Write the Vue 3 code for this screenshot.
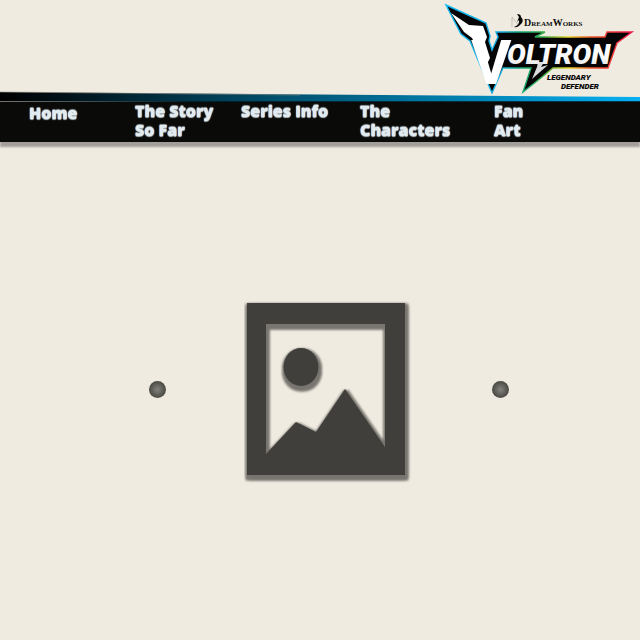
<script setup>
const links = [
  { label: 'Home', href: '#home', single: true },
  { label: 'The Story So Far', href: '#story' },
  { label: 'Series Info', href: '#series' },
  { label: 'The Characters', href: '#characters' },
  { label: 'Fan Art', href: '#art' }
]
const shades = [[-1, 1], [1, 1], [3, 1], [-1, 3], [3, 3], [-1, 5], [1, 5], [3, 5]]
</script>

<template>
  <div class="page">
    <header>
      <div class="brand">
        <a href="#home" aria-label="DreamWorks Voltron Legendary Defender">
          <svg class="logo" viewBox="440 0 200 96">
            <defs>
              <linearGradient id="edge" gradientUnits="userSpaceOnUse" x1="445" y1="0" x2="632" y2="0">
                <stop offset="0" stop-color="#12b9f5" />
                <stop offset=".3" stop-color="#16aee0" />
                <stop offset=".4" stop-color="#12a878" />
                <stop offset=".52" stop-color="#36a94b" />
                <stop offset=".66" stop-color="#e9d62a" />
                <stop offset=".78" stop-color="#f0592b" />
                <stop offset="1" stop-color="#ed1849" />
              </linearGradient>
              <linearGradient id="metal" x1="0" y1="0" x2="0" y2="1">
                <stop offset="0" stop-color="#fff" />
                <stop offset=".6" stop-color="#fafafa" />
                <stop offset="1" stop-color="#d5d7da" />
              </linearGradient>
            </defs>
            <path d="M446 5 L486 23 L490 36 L489 41 L492 50 L498 37 L496 32 H545 L535 37 H605 L607 32 H632 L617 43 L608 68 H553 L537 81 L523 92 L531 68 H503 L492 93 L470 41 L461 34 Z" fill="#050505" stroke="url(#edge)" stroke-width="1.4" />
            <path d="M451 13 L469 25 L483 26 L487 37 L485 42 L490 58 L486 66 L472 38 L464 32 Z" fill="#fff" />
            <path d="M538 62 H544 L541 67 L548 65 L532 79 L537 67 Z" fill="#d9dbdd" />
            <text class="initial" x="471" y="84">V</text>
            <text class="title" x="507" y="64" fill="url(#metal)">OLTRON</text>
            <path d="M512 27 V17 L519 26" fill="none" stroke="#aaa69d" stroke-width=".6" />
            <path d="M517 14 Q521 14 521 17 Q525 21 520 25 Q517 28 514 27 Q520 25 519 20 L517 22 L519 17 Z" fill="#080808" />
            <text class="studio" x="524" y="26"><tspan class="cap">D</tspan>REAM<tspan class="cap">W</tspan>ORKS</text>
            <text class="tag" x="547" y="80">LEGENDARY</text>
            <text class="tag" x="561" y="89">DEFENDER</text>
          </svg>
        </a>
      </div>
      <svg class="stripe" viewBox="0 0 640 11" preserveAspectRatio="none" aria-hidden="true">
        <defs>
          <linearGradient id="sky">
            <stop offset="0" stop-color="#000" />
            <stop offset=".1" stop-color="#001119" />
            <stop offset=".35" stop-color="#00415a" />
            <stop offset=".7" stop-color="#007dab" />
            <stop offset="1" stop-color="#08b0f2" />
          </linearGradient>
          <linearGradient id="line">
            <stop offset="0" stop-color="#77736e" />
            <stop offset=".3" stop-color="#00202d" />
            <stop offset="1" stop-color="#003850" />
          </linearGradient>
        </defs>
        <path d="M0 1 L640 6 V11 H0 Z" fill="url(#sky)" />
        <path d="M0 1 L300 4" stroke="#8d8982" stroke-width=".6" />
        <path d="M0 10 H640 V11 H0 Z" fill="url(#line)" />
      </svg>
      <nav aria-label="Main">
        <a v-for="link in links" :key="link.label" :href="link.href" :class="{ single: link.single }">{{ link.label }}</a>
      </nav>
    </header>
    <main>
      <button class="dot" type="button" aria-label="Previous"></button>
      <svg class="picture" viewBox="244 301 170 182" role="img" aria-label="Image placeholder">
        <defs>
          <filter id="soft" x="-5%" y="-5%" width="110%" height="110%"><feGaussianBlur stdDeviation=".8" /></filter>
          <g id="photo">
            <path fill-rule="evenodd" d="M247 303 H405 V475 H247 Z M266 324 V454 L296 422 L316 432 L345 389 L385 447 V324 Z" />
            <ellipse cx="301" cy="367" rx="17.5" ry="19" />
          </g>
        </defs>
        <g fill="#78756f" stroke="#78756f" stroke-width="1" filter="url(#soft)">
          <use v-for="([x, y], i) in shades" :key="i" href="#photo" :x="x" :y="y" />
        </g>
        <use href="#photo" fill="#403f3b" />
      </svg>
      <button class="dot" type="button" aria-label="Next"></button>
    </main>
  </div>
</template>

<style>
body {
  background: #efebe0;
}
</style>

<style scoped>
.page {
  font-family: "Open Sans", "Noto Sans", sans-serif;
}
.brand {
  display: flex;
  justify-content: flex-end;
  height: 91px;
}
.brand a {
  display: block;
  width: 200px;
  height: 96px;
}
.logo {
  display: block;
  position: relative;
  z-index: 1;
  width: 200px;
  height: 96px;
}
.initial {
  font: 700 62px Roboto, sans-serif;
  fill: #fff;
}
.title {
  font: italic 900 28px Roboto, sans-serif;
}
.studio {
  font: bold 7px "Liberation Serif", serif;
  fill: #111;
}
.cap {
  font-size: 10px;
}
.tag {
  font: italic 900 8px Roboto, sans-serif;
  fill: #050505;
}
.stripe {
  display: block;
  width: 100%;
  height: 11px;
}
nav {
  display: grid;
  grid-template-columns: 106fr 106fr 119fr 134fr 146fr;
  box-sizing: border-box;
  min-height: 40px;
  padding-left: 29px;
  background: #0a0a08;
  box-shadow: 0 5px 2px #a39e99;
}
nav a {
  padding-right: 16px;
  color: #e2ecf0;
  font-size: 16px;
  font-weight: 800;
  line-height: 19px;
  text-decoration: none;
  text-shadow: 0 0 1px #e2ecf0, 0 1px 1px #a9b4b9, 0 -1px 1px #8d989d;
}
nav a:last-child {
  padding-right: 100px;
}
nav a.single {
  padding-top: 2px;
}
main {
  display: flex;
  align-items: center;
  justify-content: center;
  gap: 78px;
  padding: 159px 0;
  margin-left: 18px;
}
.picture {
  width: 170px;
  height: 182px;
}
.dot {
  width: 17px;
  height: 17px;
  margin-bottom: 6px;
  padding: 0;
  border: 0;
  border-radius: 50%;
  background: radial-gradient(circle closest-side, #85827c, #494843);
}
</style>
